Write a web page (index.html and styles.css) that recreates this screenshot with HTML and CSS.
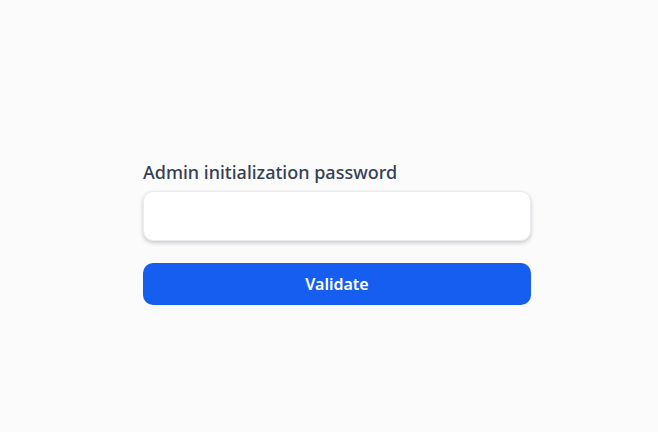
FILE: index.html
```html
<!DOCTYPE html>
<html>
<head>
<meta charset="utf-8">
<link rel="stylesheet" href="styles.css">
</head>
<body>
<main class="page">
  <form class="form">
    <label class="label" for="pw">Admin initialization password</label>
    <input class="input" id="pw" type="password">
    <button class="btn" type="button">Validate</button>
  </form>
</main>
</body>
</html>
```
FILE: styles.css
```css
html, body {
  margin: 0;
  height: 100%;
  background: #fbfbfc;
}
.page {
  display: flex;
  justify-content: center;
  padding-left: 16px;
  padding-top: 160px;
  font-family: "Noto Sans", "Open Sans", sans-serif;
}
.form {
  width: 388px;
  display: flex;
  flex-direction: column;
}
.label {
  font-size: 18px;
  font-weight: 500;
  line-height: 24px;
  color: #354052;
  margin-bottom: 7px;
}
.input {
  box-sizing: border-box;
  height: 50px;
  border: 1px solid #e9ebf0;
  border-radius: 10px;
  background: #fff;
  box-shadow: 0 2px 4px rgba(0,0,0,0.2);
  outline: none;
  padding: 0 12px;
}
.btn {
  margin-top: 22px;
  height: 42px;
  border: none;
  border-radius: 10px;
  background: #155eef;
  color: #fff;
  font-family: inherit;
  font-size: 16px;
  font-weight: 600;
}
```
